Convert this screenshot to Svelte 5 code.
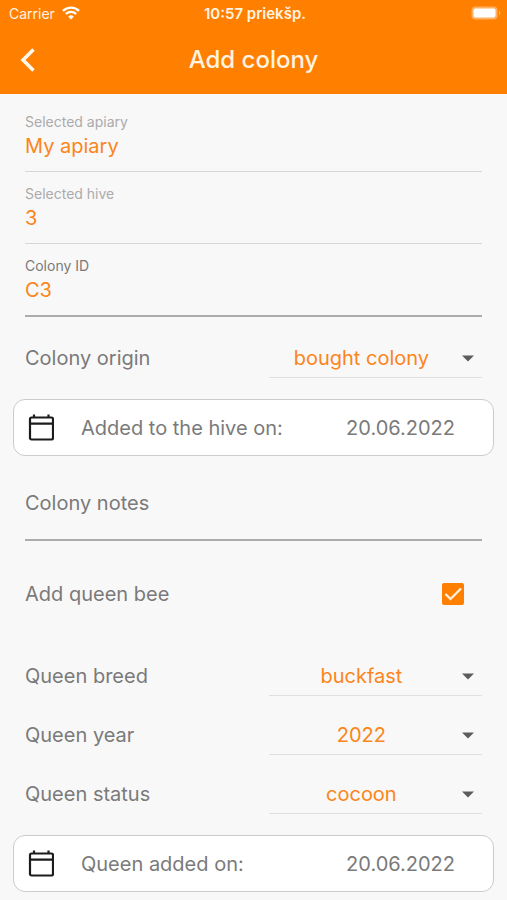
<script>
    let apiary = $state("My apiary");
    let hive = $state("3");
    let colonyId = $state("C3");
    let notes = $state("");
    let addQueen = $state(true);

    let origin = $state("bought colony");
    let queen = $state({ breed: "buckfast", year: "2022", status: "cocoon" });

    const origins = ["bought colony", "swarm", "split"];
    const queenRows = [
        { key: "breed", label: "Queen breed", options: ["buckfast", "carnica", "ligustica"] },
        { key: "year", label: "Queen year", options: ["2022", "2021", "2020"] },
        { key: "status", label: "Queen status", options: ["cocoon", "virgin", "mated"] },
    ];
</script>

{#snippet arrow()}
    <svg class="arrow" viewBox="0 0 12 7" aria-hidden="true">
        <path d="M0 0.5h12L6 6.500z" />
    </svg>
{/snippet}

{#snippet dateCard(label, date)}
    <button type="button" class="date-card">
        <svg class="calendar" viewBox="0 0 26 28" aria-hidden="true">
            <rect x="2" y="3.5" width="23" height="22" rx="1.5" />
            <path d="M2 9.700h23M6 0.500v3M20.500 0.500v3" />
        </svg>
        <span class="date-label">{label}</span>
        <span>{date}</span>
    </button>
{/snippet}

<header>
    <div class="status">
        <div class="carrier">
            <span>Carrier</span>
            <svg class="wifi" viewBox="0 0 18 14" aria-hidden="true">
                <path class="arc" d="M1 4.9a11.5 11.5 0 0 1 16 0M3.9 8a7.3 7.3 0 0 1 10.2 0" />
                <path class="dot" d="M9 13.6L6.2 10.7a4 4 0 0 1 5.6 0z" />
            </svg>
        </div>
        <span class="time">10:57 priekšp.</span>
        <div class="battery">
            <svg viewBox="0 0 30 14" aria-hidden="true">
                <rect class="shell" x="0.5" y="0.5" width="26" height="13" rx="4" />
                <rect x="2.5" y="2.5" width="22" height="9" rx="2" />
                <path class="shell" d="M28 4.5c2 .8 2 4.200 0 5z" />
            </svg>
        </div>
    </div>
    <div class="bar">
        <button type="button" class="back" aria-label="Back">
            <svg viewBox="0 0 16 24" aria-hidden="true">
                <path d="M13.500 1.500L3 12l10.500 10.500" />
            </svg>
        </button>
        <h1>Add colony</h1>
    </div>
</header>

<form>
    <div class="field">
        <label class="dim" for="apiary">Selected apiary</label>
        <input id="apiary" type="text" readonly bind:value={apiary} />
    </div>
    <div class="field">
        <label class="dim" for="hive">Selected hive</label>
        <input id="hive" type="text" readonly bind:value={hive} />
    </div>
    <div class="field active">
        <label for="colony-id">Colony ID</label>
        <input id="colony-id" type="text" bind:value={colonyId} />
    </div>

    <div class="row origin">
        <label for="origin">Colony origin</label>
        <div class="picker">
            <select id="origin" bind:value={origin}>
                {#each origins as o}
                    <option>{o}</option>
                {/each}
            </select>
            {@render arrow()}
        </div>
    </div>

    {@render dateCard("Added to the hive on:", "20.06.2022")}

    <input class="notes" type="text" aria-label="Colony notes" placeholder="Colony notes" bind:value={notes} />

    <div class="check-row">
        <label for="add-queen">Add queen bee</label>
        <div class="check">
            <input id="add-queen" type="checkbox" bind:checked={addQueen} />
            <svg viewBox="0 0 22 22" aria-hidden="true">
                <path d="M3.500 11l5 5L19 5.500" />
            </svg>
        </div>
    </div>

    {#if addQueen}
        {#each queenRows as row}
            <div class="row">
                <label for={row.key}>{row.label}</label>
                <div class="picker">
                    <select id={row.key} bind:value={queen[row.key]}>
                        {#each row.options as o}
                            <option>{o}</option>
                        {/each}
                    </select>
                    {@render arrow()}
                </div>
            </div>
        {/each}

        {@render dateCard("Queen added on:", "20.06.2022")}
    {/if}
</form>

<style>
:global(body) {
    margin: 0;
    background: #f8f8f8;
}

header, form, input, select, button {
    font-family: Inter, Roboto, sans-serif;
}

input, select, button {
    box-sizing: border-box;
    margin: 0;
    padding: 0;
    border: 0;
    border-radius: 0;
    background: none;
    font-size: 20px;
    outline: none;
}

header {
    background: #ff8000;
    color: #fff3e2;
}

.status {
    display: grid;
    grid-template-columns: 1fr auto 1fr;
    align-items: center;
    height: 26px;
    padding: 0 6px 0 9px;
    font-size: 14px;
}

.carrier {
    display: flex;
    align-items: center;
    gap: 7px;
}

.wifi {
    width: 18px;
    height: 14px;
}

.arc {
    fill: none;
    stroke: #fff;
    stroke-width: 2.4;
}

.dot {
    fill: #fff;
}

.time {
    font-size: 15px;
    font-weight: 600;
}

.battery {
    display: flex;
    justify-content: flex-end;
}

.battery svg {
    width: 30px;
    height: 14px;
    fill: #fff;
}

.battery .shell {
    fill: #ffb060;
}

.bar {
    display: grid;
    grid-template-columns: 56px 1fr 56px;
    align-items: center;
    height: 68px;
}

.back {
    display: flex;
    align-items: center;
    justify-content: center;
    height: 48px;
}

.back svg {
    width: 16px;
    height: 24px;
    fill: none;
    stroke: #fff8ee;
    stroke-width: 3.5;
}

h1 {
    margin: 0;
    text-align: center;
    font-size: 24px;
    font-weight: 500;
    line-height: 32px;
}

form {
    padding: 6px 13px 9px;
    color: #7a7a7a;
    font-size: 20px;
}

.field {
    display: flex;
    flex-direction: column;
    box-sizing: border-box;
    height: 72px;
    margin: 0 12px;
    padding-top: 11px;
    border-bottom: 1px solid #d6d6d6;
}

.field label {
    font-size: 14px;
    line-height: 21px;
}

.field .dim {
    color: #ababab;
}

.field input {
    width: 100%;
    height: 28px;
    color: #fb851b;
}

.field.active {
    height: 73px;
    border-bottom: 2px solid #acacac;
}

.row {
    display: flex;
    align-items: flex-end;
    height: 59px;
    margin: 0 12px;
}

.row label {
    flex: 8 1 0;
    line-height: 39px;
}

.row.origin {
    height: 61px;
    margin-bottom: 21px;
}

.picker {
    display: grid;
    flex: 7 1 0;
    align-items: center;
    border-bottom: 1px solid #e0e0e0;
}

.picker select {
    grid-area: 1 / 1;
    width: 100%;
    height: 38px;
    padding-right: 28px;
    appearance: none;
    color: #fb851b;
    text-align: center;
    text-align-last: center;
}

.arrow {
    grid-area: 1 / 1;
    justify-self: end;
    width: 12px;
    height: 7px;
    margin-right: 8px;
    fill: #5c5c5c;
    pointer-events: none;
}

.date-card {
    display: flex;
    align-items: center;
    width: 100%;
    height: 57px;
    padding: 0 38px 0 14px;
    border: 1px solid #cbcbcb;
    border-radius: 12px;
    background: #fff;
    color: #7a7a7a;
}

.calendar {
    width: 26px;
    height: 28px;
    fill: none;
    stroke: #1c1c1c;
    stroke-width: 2.2;
}

.date-label {
    flex: 1;
    margin-left: 27px;
    text-align: left;
}

.notes {
    display: block;
    width: calc(100% - 24px);
    height: 61px;
    margin: 24px 12px 0;
    padding-bottom: 14px;
    border-bottom: 2px solid #acacac;
    color: #fb851b;
}

.notes::placeholder {
    color: #7a7a7a;
    opacity: 1;
}

.check-row {
    display: flex;
    align-items: center;
    justify-content: space-between;
    height: 48px;
    margin: 29px 30px 19px 12px;
}

.check {
    display: grid;
}

.check input {
    grid-area: 1 / 1;
    width: 22px;
    height: 22px;
    border: 2px solid #7a7a7a;
    border-radius: 2px;
    appearance: none;
}

.check input:checked {
    border-color: #ff8000;
    background: #ff8000;
}

.check svg {
    grid-area: 1 / 1;
    width: 22px;
    height: 22px;
    fill: none;
    stroke: #fff3e2;
    stroke-width: 2.2;
    pointer-events: none;
}

.row + .date-card {
    margin-top: 21px;
}
</style>
